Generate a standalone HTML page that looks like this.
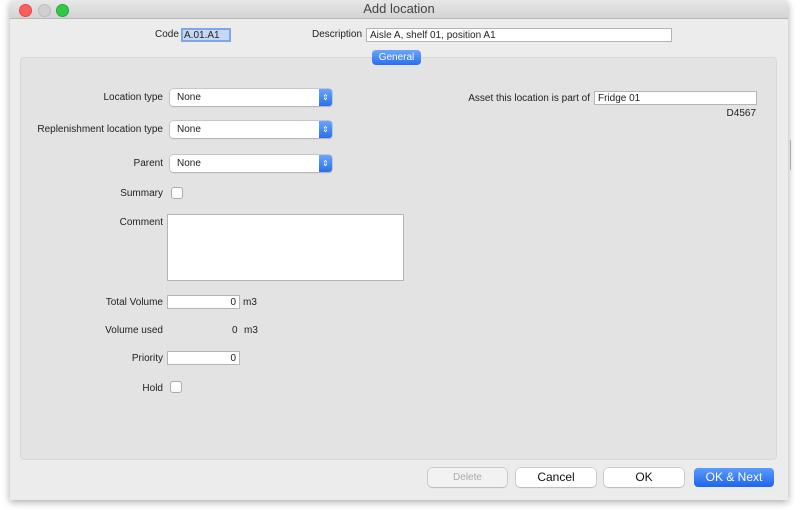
<!DOCTYPE html>
<html><head><style>
body{margin:0;width:800px;height:510px;background:#fff;position:relative;overflow:hidden;font-family:"Liberation Sans",sans-serif;font-size:10px;color:#222}
.a{position:absolute}
.win{left:10px;top:0;width:778px;height:500px;background:#ececec;box-shadow:0 2px 8px rgba(0,0,0,.35);border-radius:5px 5px 0 0;overflow:hidden}
.tb{left:0;top:0;width:778px;height:18px;background:linear-gradient(#e8e8e8,#d3d3d3);border-bottom:1px solid #b8b8b8;text-align:center;line-height:18px;font-size:13px;color:#444}
.dot{width:11px;height:11px;border-radius:50%;top:4px}
.lbl{text-align:right;width:160px}
.in{background:#fff;border:1px solid #b5b5b5;box-sizing:border-box;padding:0 3px;height:14px;line-height:13px}
.sel{background:#fff;border-radius:3px;box-shadow:0 0 0 .5px #aaa,0 1px 1px rgba(0,0,0,.2);height:17px;width:162px;line-height:18px;padding-left:7px;box-sizing:border-box}
.sel i{position:absolute;right:0;top:0;width:13px;height:17px;background:linear-gradient(#6aa6fb,#2a6ef0);border-radius:0 3px 3px 0;color:#fff;font-style:normal;font-size:8px;text-align:center;line-height:17px}
.cb{width:12px;height:12px;background:#fff;border:1px solid #aaa;border-radius:3px;box-sizing:border-box}
.btn{height:19px;border-radius:4px;background:#fff;box-shadow:0 0 0 .5px #aaa,0 1px 1px rgba(0,0,0,.15);text-align:center;line-height:19px;font-size:12px;color:#111}
</style></head><body>
<div class="a" style="left:790px;top:140px;width:1px;height:30px;background:#bbb"></div>
<div class="a win">
<div class="a tb">Add location</div>
<div class="a dot" style="left:9px;background:#fc605c;border:.5px solid #de4a44"></div>
<div class="a dot" style="left:28px;background:#d0d0d0;border:.5px solid #bbb"></div>
<div class="a dot" style="left:46px;background:#34c84a;border:.5px solid #24a83a"></div>

<div class="a" style="left:145px;top:29px">Code</div>
<div class="a in" style="left:171px;top:28px;width:50px;height:14px;background:#c6d8f6;border:2px solid #7fa7e8;line-height:11px;padding:0 1px">A.01.A1</div>
<div class="a" style="left:302px;top:29px">Description</div>
<div class="a in" style="left:356px;top:28px;width:306px">Aisle A, shelf 01, position A1</div>

<div class="a" style="left:10px;top:57px;width:755px;height:401px;background:#e3e3e3;border-radius:4px;border:1px solid #d8d8d8"></div>
<div class="a" style="left:362px;top:50px;width:49px;height:15px;border-radius:4px;background:linear-gradient(#6aa6fb,#2a6ef0);color:#fff;text-align:center;line-height:15px">General</div>

<div class="a lbl" style="left:-7px;top:92px">Location type</div>
<div class="a sel" style="left:160px;top:89px">None<i>⇕</i></div>
<div class="a lbl" style="left:-7px;top:124px">Replenishment location type</div>
<div class="a sel" style="left:160px;top:121px">None<i>⇕</i></div>
<div class="a lbl" style="left:-7px;top:158px">Parent</div>
<div class="a sel" style="left:160px;top:155px">None<i>⇕</i></div>
<div class="a lbl" style="left:-7px;top:188px">Summary</div>
<div class="a cb" style="left:161px;top:187px"></div>
<div class="a lbl" style="left:-7px;top:217px">Comment</div>
<div class="a in" style="left:157px;top:214px;width:237px;height:67px"></div>
<div class="a lbl" style="left:-7px;top:297px">Total Volume</div>
<div class="a in" style="left:157px;top:295px;width:73px;text-align:right">0</div>
<div class="a" style="left:233px;top:297px">m3</div>
<div class="a lbl" style="left:-7px;top:325px">Volume used</div>
<div class="a" style="left:222px;top:325px">0</div>
<div class="a" style="left:234px;top:325px">m3</div>
<div class="a lbl" style="left:-7px;top:353px">Priority</div>
<div class="a in" style="left:157px;top:351px;width:73px;text-align:right">0</div>
<div class="a lbl" style="left:-7px;top:383px">Hold</div>
<div class="a cb" style="left:160px;top:381px"></div>

<div class="a" style="left:380px;top:93px;width:200px;text-align:right">Asset this location is part of</div>
<div class="a in" style="left:584px;top:91px;width:163px">Fridge 01</div>
<div class="a" style="left:710px;top:108px;width:36px;text-align:right">D4567</div>

<div class="a btn" style="left:418px;top:468px;width:79px;color:#aaa;background:#f2f2f2;font-size:10px">Delete</div>
<div class="a btn" style="left:506px;top:468px;width:80px">Cancel</div>
<div class="a btn" style="left:594px;top:468px;width:80px">OK</div>
<div class="a btn" style="left:684px;top:468px;width:80px;background:linear-gradient(#5a9bfb,#1f64ee);color:#fff;box-shadow:none">OK &amp; Next</div>
</div>
</body></html>
